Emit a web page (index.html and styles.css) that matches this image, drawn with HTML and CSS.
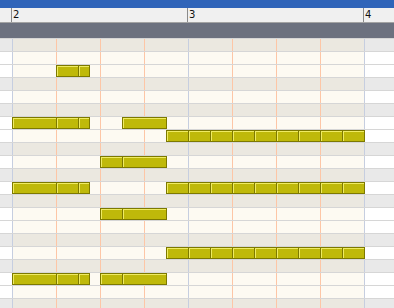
FILE: index.html
```html
<!DOCTYPE html>
<html>
<head>
<meta charset="utf-8">
<link rel="stylesheet" href="styles.css">
</head>
<body>
<div class="app">
  <div class="titlebar"></div>
  <div class="ruler">
    <div class="ruler-pad"></div>
    <div class="bar-label">2</div>
    <div class="bar-label">3</div>
    <div class="bar-label last">4</div>
  </div>
  <div class="track-header"></div>
  <div class="grid">
    <div class="row black"><div class="key"></div><div class="bar"></div><div class="bar"></div><div class="rest"></div></div>
    <div class="row"><div class="key"></div><div class="bar"></div><div class="bar"></div><div class="rest"></div></div>
    <div class="row"><div class="key"></div><div class="bar"></div><div class="bar"></div><div class="rest"></div></div>
    <div class="row black"><div class="key"></div><div class="bar"></div><div class="bar"></div><div class="rest"></div></div>
    <div class="row"><div class="key"></div><div class="bar"></div><div class="bar"></div><div class="rest"></div></div>
    <div class="row black"><div class="key"></div><div class="bar"></div><div class="bar"></div><div class="rest"></div></div>
    <div class="row"><div class="key"></div><div class="bar"></div><div class="bar"></div><div class="rest"></div></div>
    <div class="row"><div class="key"></div><div class="bar"></div><div class="bar"></div><div class="rest"></div></div>
    <div class="row black"><div class="key"></div><div class="bar"></div><div class="bar"></div><div class="rest"></div></div>
    <div class="row"><div class="key"></div><div class="bar"></div><div class="bar"></div><div class="rest"></div></div>
    <div class="row black"><div class="key"></div><div class="bar"></div><div class="bar"></div><div class="rest"></div></div>
    <div class="row"><div class="key"></div><div class="bar"></div><div class="bar"></div><div class="rest"></div></div>
    <div class="row black"><div class="key"></div><div class="bar"></div><div class="bar"></div><div class="rest"></div></div>
    <div class="row"><div class="key"></div><div class="bar"></div><div class="bar"></div><div class="rest"></div></div>
    <div class="row"><div class="key"></div><div class="bar"></div><div class="bar"></div><div class="rest"></div></div>
    <div class="row black"><div class="key"></div><div class="bar"></div><div class="bar"></div><div class="rest"></div></div>
    <div class="row"><div class="key"></div><div class="bar"></div><div class="bar"></div><div class="rest"></div></div>
    <div class="row black"><div class="key"></div><div class="bar"></div><div class="bar"></div><div class="rest"></div></div>
    <div class="row"><div class="key"></div><div class="bar"></div><div class="bar"></div><div class="rest"></div></div>
    <div class="row"><div class="key"></div><div class="bar"></div><div class="bar"></div><div class="rest"></div></div>
    <div class="row black"><div class="key"></div><div class="bar"></div><div class="bar"></div><div class="rest"></div></div>

    <!-- notes -->
    <div class="note" style="top:27px;left:56px"><div class="seg" style="width:21px"></div><div class="seg div" style="width:11px"></div></div>

    <div class="note" style="top:79px;left:12px"><div class="seg" style="width:43px"></div><div class="seg div" style="width:22px"></div><div class="seg div" style="width:11px"></div></div>
    <div class="note" style="top:79px;left:122px"><div class="seg" style="width:43px"></div></div>

    <div class="note" style="top:92px;left:166px"><div class="seg" style="width:21px"></div><div class="seg div" style="width:22px"></div><div class="seg div" style="width:22px"></div><div class="seg div" style="width:22px"></div><div class="seg div" style="width:22px"></div><div class="seg div" style="width:22px"></div><div class="seg div" style="width:22px"></div><div class="seg div" style="width:22px"></div><div class="seg div" style="width:22px"></div></div>

    <div class="note" style="top:118px;left:100px"><div class="seg" style="width:21px"></div><div class="seg div" style="width:44px"></div></div>

    <div class="note" style="top:144px;left:12px"><div class="seg" style="width:43px"></div><div class="seg div" style="width:22px"></div><div class="seg div" style="width:11px"></div></div>
    <div class="note" style="top:144px;left:166px"><div class="seg" style="width:21px"></div><div class="seg div" style="width:22px"></div><div class="seg div" style="width:22px"></div><div class="seg div" style="width:22px"></div><div class="seg div" style="width:22px"></div><div class="seg div" style="width:22px"></div><div class="seg div" style="width:22px"></div><div class="seg div" style="width:22px"></div><div class="seg div" style="width:22px"></div></div>

    <div class="note" style="top:170px;left:100px"><div class="seg" style="width:21px"></div><div class="seg div" style="width:44px"></div></div>

    <div class="note" style="top:209px;left:166px"><div class="seg" style="width:21px"></div><div class="seg div" style="width:22px"></div><div class="seg div" style="width:22px"></div><div class="seg div" style="width:22px"></div><div class="seg div" style="width:22px"></div><div class="seg div" style="width:22px"></div><div class="seg div" style="width:22px"></div><div class="seg div" style="width:22px"></div><div class="seg div" style="width:22px"></div></div>

    <div class="note" style="top:235px;left:12px"><div class="seg" style="width:43px"></div><div class="seg div" style="width:22px"></div><div class="seg div" style="width:11px"></div></div>
    <div class="note" style="top:235px;left:100px"><div class="seg" style="width:21px"></div><div class="seg div" style="width:44px"></div></div>
  </div>
</div>
</body>
</html>
```
FILE: styles.css
```css
html, body {
  margin: 0;
  padding: 0;
  background: #ffffff;
}
.app {
  width: 394px;
  height: 308px;
  overflow: hidden;
  font-family: "DejaVu Sans", "Liberation Sans", sans-serif;
}
.titlebar {
  height: 8px;
  background: #2f64b9;
}
.ruler {
  display: flex;
  height: 14px;
  background: #f0f0f0;
  border-bottom: 1px solid #a3a3a3;
}
.ruler-pad {
  width: 11px;
  flex: none;
}
.bar-label {
  width: 176px;
  flex: none;
  box-sizing: border-box;
  border-left: 1px solid #8a8a8a;
  padding-left: 1px;
  font-size: 10px;
  line-height: 14px;
  color: #111;
}
.bar-label.last {
  flex: 1;
}
.track-header {
  height: 15px;
  background: #6c717f;
}
.grid {
  position: relative;
}
.row {
  display: grid;
  grid-template-columns: 12px 176px 176px 1fr;
  height: 12px;
  border-top: 1px solid #d6d6d6;
}
.key, .rest {
  background: #ffffff;
}
.bar {
  border-left: 1px solid #c6cee0;
  background-color: #fdfaf2;
  background-image: repeating-linear-gradient(to right, transparent 0, transparent 43px, #fdc6a6 43px, #fdc6a6 44px);
}
.rest {
  border-left: 1px solid #c6cee0;
}
.row.black .key, .row.black .rest {
  background-color: #e9e9e9;
}
.row.black .bar {
  background-color: #ebe8e0;
}
.note {
  position: absolute;
  display: flex;
  height: 12px;
  box-sizing: border-box;
  border: 1px solid #7d7900;
  background: #bfb90a;
}
.seg {
  height: 10px;
  box-sizing: border-box;
  box-shadow: inset 1px 1px 0 #efeb63;
}
.seg.div {
  border-left: 1px solid #7d7900;
}
```
